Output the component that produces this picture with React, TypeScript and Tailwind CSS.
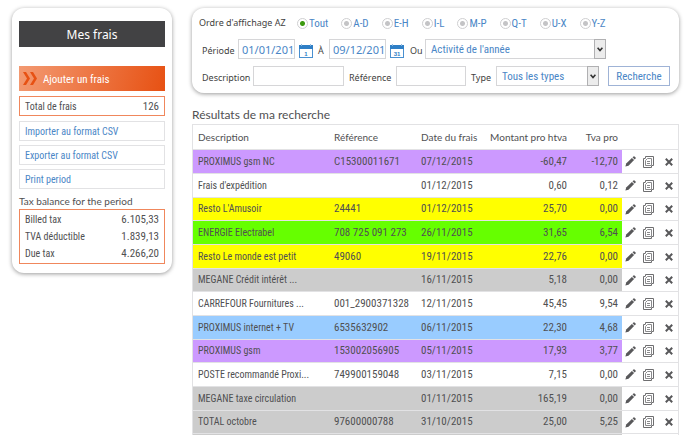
import { useState } from "react";

const label = "font-['Lato','Noto_Sans',sans-serif]";
const small = "font-['Noto_Sans',sans-serif]";
const narrow = "font-['Roboto_Condensed','Roboto',sans-serif]";

type Row = {
  tone: string;
  description: string;
  reference: string;
  date: string;
  amount: string;
  vat: string;
};

const purple = "bg-[#cc99ff]";
const yellow = "bg-[#ffff00]";
const green = "bg-[#66ff00]";
const grey = "bg-[#cccccc]";
const blue = "bg-[#99ccff]";
const white = "bg-white";

const rows: Row[] = [
  { tone: purple, description: "PROXIMUS gsm NC", reference: "C15300011671", date: "07/12/2015", amount: "-60,47", vat: "-12,70" },
  { tone: white, description: "Frais d'expédition", reference: "", date: "01/12/2015", amount: "0,60", vat: "0,12" },
  { tone: yellow, description: "Resto L'Amusoir", reference: "24441", date: "01/12/2015", amount: "25,70", vat: "0,00" },
  { tone: green, description: "ENERGIE Electrabel", reference: "708 725 091 273", date: "26/11/2015", amount: "31,65", vat: "6,54" },
  { tone: yellow, description: "Resto Le monde est petit", reference: "49060", date: "19/11/2015", amount: "22,76", vat: "0,00" },
  { tone: grey, description: "MEGANE Crédit intérêt ...", reference: "", date: "16/11/2015", amount: "5,18", vat: "0,00" },
  { tone: white, description: "CARREFOUR Fournitures ...", reference: "001_2900371328", date: "12/11/2015", amount: "45,45", vat: "9,54" },
  { tone: blue, description: "PROXIMUS internet + TV", reference: "6535632902", date: "06/11/2015", amount: "22,30", vat: "4,68" },
  { tone: purple, description: "PROXIMUS gsm", reference: "153002056905", date: "05/11/2015", amount: "17,93", vat: "3,77" },
  { tone: white, description: "POSTE recommandé Proxi...", reference: "749900159048", date: "03/11/2015", amount: "7,15", vat: "0,00" },
  { tone: grey, description: "MEGANE taxe circulation", reference: "", date: "01/11/2015", amount: "165,19", vat: "0,00" },
  { tone: grey, description: "TOTAL octobre", reference: "97600000788", date: "31/10/2015", amount: "25,00", vat: "5,25" },
  { tone: grey, description: "", reference: "", date: "", amount: "", vat: "" },
];

const ranges = ["Tout", "A-D", "E-H", "I-L", "M-P", "Q-T", "U-X", "Y-Z"];

function PencilIcon() {
  return (
    <svg width="11" height="11" viewBox="0 0 11 11" fill="#58585a" aria-hidden="true">
      <path d="M0.4 10.6 L1.2 7.4 L6.9 1.9 L9.1 4.1 L3.5 9.8 Z" />
      <path d="M7.5 1.3 L8.5 0.4 Q9 0 9.5 0.4 L10.6 1.5 Q11 2 10.6 2.5 L9.7 3.5 Z" />
    </svg>
  );
}

function CopyIcon() {
  return (
    <svg width="11" height="12" viewBox="0 0 11 12" fill="none" stroke="#6e6e70" aria-hidden="true">
      <path d="M2.5 2 V0.5 H10.5 V9.5 H9" />
      <path d="M2.5 2.5 H0.5 V11.5 H8.5 V9.5" />
      <path d="M4.5 2.5 H8.5 V9.5 H2.5 V4.5 Z" stroke="#8a8a8c" />
      <path d="M4 5.5 H7 M4 7.5 H7" stroke="#8a8a8c" />
    </svg>
  );
}

function CrossIcon() {
  return (
    <svg width="8" height="8" viewBox="0 0 8 8" fill="none" stroke="#58585a" strokeWidth="2" aria-hidden="true">
      <path d="M0.8 0.8 L7.2 7.2 M7.2 0.8 L0.8 7.2" />
    </svg>
  );
}

function CalendarIcon({ day }: { day: string }) {
  return (
    <svg width="14" height="14" viewBox="0 0 14 14" aria-hidden="true">
      <rect x="0.5" y="1.5" width="13" height="12" fill="#fff" stroke="#4a90d0" />
      <rect x="0" y="1" width="14" height="4" fill="#2f7fc6" />
      <path d="M2.5 0 V2 M11.5 0 V2" stroke="#8fbbe2" />
      <text x="7" y="12" textAnchor="middle" fontSize="6" fontWeight="700" fill="#2f7fc6" fontFamily="Liberation Sans, sans-serif">
        {day}
      </text>
    </svg>
  );
}

function SelectBox({ id, value, className }: { id: string; value: string; className: string }) {
  return (
    <div className={`relative h-5 ${className}`}>
      <select
        id={id}
        className={`h-full w-full appearance-none border border-[#d6d6d8] bg-white pt-0.5 pl-[5px] pr-4 text-[11px] leading-4 text-[#4a86c6] ${narrow}`}
      >
        <option>{value}</option>
      </select>
      <span className="pointer-events-none absolute inset-y-0 right-0 flex w-3 items-center justify-center border border-[#b0b0b2] bg-[#ececec]">
        <svg width="6" height="5" viewBox="0 0 6 5" fill="none" stroke="#333" strokeWidth="1.6" aria-hidden="true">
          <path d="M0.6 0.8 L3 3.6 L5.4 0.8" />
        </svg>
      </span>
    </div>
  );
}

function Sidebar() {
  const link = "flex h-5 items-center border border-[#e2e2e4] px-[5px] pt-0.5 text-[10px] text-[#4a86c6]";
  return (
    <aside className={`w-40 shrink-0 rounded-xl bg-white px-[7px] pt-[13px] pb-[9px] text-[11px] leading-4 text-[#505052] shadow-[0_1px_4px_rgba(0,0,0,0.4)] ${narrow}`}>
      <h1 className={`flex h-[26px] items-center justify-center bg-[#424244] pt-0.5 text-[12px] text-white ${small}`}>Mes frais</h1>
      <button type="button" className="mt-[19px] flex h-[25px] w-full items-center gap-[6px] bg-[linear-gradient(105deg,#f39a72,#e75113)] pl-1 text-[11px] text-white">
        <svg width="14" height="13" viewBox="0 0 14 13" fill="#e75113" aria-hidden="true">
          <path d="M0 0 H3 L7 6.5 L3 13 H0 L4 6.5 Z M7 0 H10 L14 6.5 L10 13 H7 L11 6.5 Z" />
        </svg>
        <span className="pt-0.5">Ajouter un frais</span>
      </button>
      <div className="mt-[5px] flex h-5 items-center justify-between border border-[#f0875c] px-[5px] pt-0.5">
        <span className="text-[10px]">Total de frais</span>
        <span>126</span>
      </div>
      <nav className="mt-[5px] flex flex-col gap-1">
        <a href="#import" className={link}>Importer au format CSV</a>
        <a href="#export" className={link}>Exporter au format CSV</a>
        <a href="#print" className={link}>Print period</a>
      </nav>
      <h2 className={`mt-1 text-[10px] leading-4 ${label}`}>Tax balance for the period</h2>
      <dl className="grid grid-cols-[1fr_auto] border border-[#f0875c] px-[5px] py-px text-right leading-[17px] [&>dt]:text-left [&>dt]:text-[10px]">
        <dt>Billed tax</dt>
        <dd>6.105,33</dd>
        <dt>TVA déductible</dt>
        <dd>1.839,13</dd>
        <dt>Due tax</dt>
        <dd>4.266,20</dd>
      </dl>
    </aside>
  );
}

function Filters() {
  const [range, setRange] = useState("Tout");
  const field = `h-5 border border-[#d6d6d8] bg-white pr-px pl-[3px] text-[#4a86c6] ${small}`;
  return (
    <form className={`rounded-xl bg-white pb-[7px] pl-[7px] text-[9px] leading-4 text-[#3f3f41] shadow-[0_1px_4px_rgba(0,0,0,0.4)] ${small}`}>
      <fieldset className="flex items-center pt-[7px]">
        <legend className="float-left w-[98px]">Ordre d'affichage AZ</legend>
        <div className={`flex items-center gap-[13px] text-[11px] text-[#4a86c6] ${narrow}`}>
          {ranges.map((r) => (
            <label key={r} className="flex items-center gap-px">
              <input
                type="radio"
                name="range"
                checked={range === r}
                onChange={() => setRange(r)}
                className="size-[11px] appearance-none rounded-full border border-[#cfcfd1] bg-[radial-gradient(circle,#c4c4c6_2px,#fff_3px)] checked:bg-[radial-gradient(circle,#3c9a10_2px,#fff_3px)]"
              />
              <span className="pt-0.5 leading-[14px]">{r}</span>
            </label>
          ))}
        </div>
      </fieldset>
      <div className="mt-2 flex items-end pl-[3px]">
        <label htmlFor="from" className="w-9">Période</label>
        <input id="from" defaultValue="01/01/2015" className={`w-[57px] text-[11px] ${field}`} />
        <button type="button" aria-label="Date de début" className="ml-1 pb-px"><CalendarIcon day="1" /></button>
        <label htmlFor="to" className="ml-[5px] w-[11px]">À</label>
        <input id="to" defaultValue="09/12/2015" className={`w-[57px] text-[11px] ${field}`} />
        <button type="button" aria-label="Date de fin" className="ml-1 pb-px"><CalendarIcon day="31" /></button>
        <label htmlFor="period" className="ml-[6px] w-[15px]">Ou</label>
        <SelectBox id="period" value="Activité de l'année" className="w-[181px]" />
      </div>
      <div className="mt-[7px] flex items-end pl-[3px]">
        <label htmlFor="description" className="w-[51px]">Description</label>
        <input id="description" className={`w-[91px] ${field}`} />
        <label htmlFor="reference" className="ml-[5px] w-[47px]">Référence</label>
        <input id="reference" className={`w-[70px] ${field}`} />
        <label htmlFor="type" className="ml-[5px] w-[25px]">Type</label>
        <SelectBox id="type" value="Tous les types" className="w-[103px]" />
        <button type="submit" className={`ml-[9px] h-5 w-[62px] border border-[#9fb3d6] pt-0.5 text-[11px] text-[#4a86c6] ${narrow}`}>Recherche</button>
      </div>
    </form>
  );
}

function Results() {
  return (
    <section>
      <h2 className={`mt-[13px] text-[12px] leading-[18px] text-[#505052] ${label}`}>Résultats de ma recherche</h2>
      <table className={`w-full table-fixed border-separate border-spacing-0 border-x border-[#e2e2e4] text-left text-[11px] leading-4 text-[#505052] [&_td]:border-t [&_td]:border-[#e2e2e4] [&_th]:border-t [&_th]:border-[#e2e2e4] ${narrow}`}>
        <thead>
          <tr className={`h-[25px] text-[10px] ${label} [&>th]:font-normal`}>
            <th className="pl-[5px]">Description</th>
            <th className="w-[87px] pl-[6px]">Référence</th>
            <th className="w-[66px] pl-[6px]">Date du frais</th>
            <th className="w-[91px] pr-[5px] text-right">Montant pro htva</th>
            <th className="w-[50px] pr-1 text-right">Tva pro</th>
            <th className="w-14" aria-label="Actions" />
          </tr>
        </thead>
        <tbody>
          {rows.map((row, i) => (
            <tr key={i} className="h-6 nth-[3n]:h-[23px]">
              <td className={`pl-[5px] text-[10px] whitespace-nowrap ${row.tone}`}>{row.description}</td>
              <td className={`pl-[6px] whitespace-nowrap ${row.tone}`}>{row.reference}</td>
              <td className={`pl-[6px] ${row.tone}`}>{row.date}</td>
              <td className={`pr-[5px] text-right ${row.tone}`}>{row.amount}</td>
              <td className={`pr-1 text-right ${row.tone}`}>{row.vat}</td>
              <td>
                <div className="flex items-center gap-[7px] pr-[5px] pl-[3px]">
                  <button type="button" aria-label="Modifier"><PencilIcon /></button>
                  <button type="button" aria-label="Dupliquer"><CopyIcon /></button>
                  <button type="button" aria-label="Supprimer" className="ml-auto"><CrossIcon /></button>
                </div>
              </td>
            </tr>
          ))}
        </tbody>
      </table>
    </section>
  );
}

export default function App() {
  return (
    <div className="flex h-screen items-start gap-5 overflow-hidden bg-white pt-2 pr-[11px] pl-3">
      <Sidebar />
      <main className="min-w-0 flex-1">
        <Filters />
        <Results />
      </main>
    </div>
  );
}
